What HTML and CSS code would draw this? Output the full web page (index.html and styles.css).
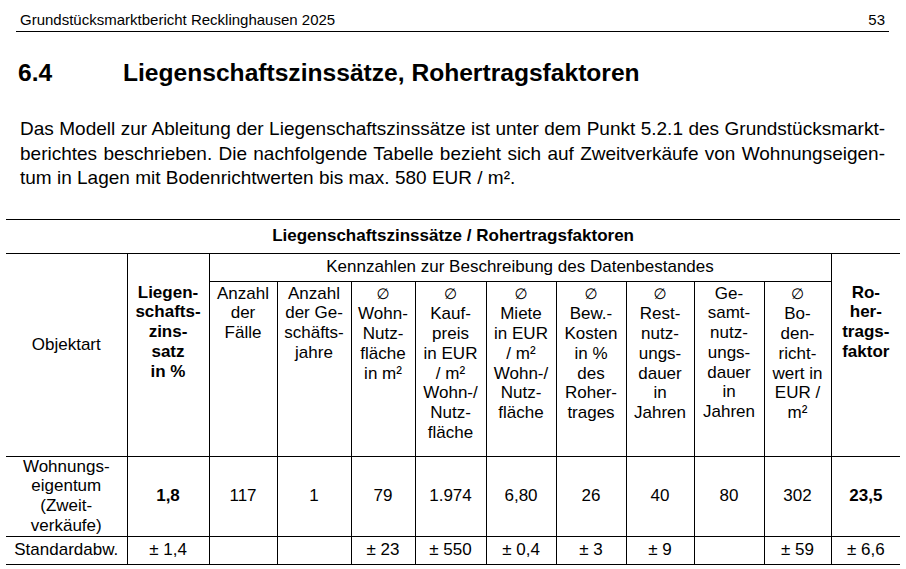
FILE: index.html
```html
<!DOCTYPE html>
<html lang="de">
<head>
<meta charset="utf-8">
<title>Grundstücksmarktbericht Recklinghausen 2025</title>
<link rel="stylesheet" href="styles.css">
</head>
<body>
<div class="page">
  <header class="running-head">
    <span>Grundstücksmarktbericht Recklinghausen 2025</span>
    <span>53</span>
  </header>

  <h1 class="section-title"><span class="sec-num">6.4</span><span>Liegenschaftszinssätze, Rohertragsfaktoren</span></h1>

  <p class="intro">
    <span class="jline">Das Modell zur Ableitung der Liegenschaftszinssätze ist unter dem Punkt 5.2.1 des Grundstücksmarkt-</span>
    <span class="jline">berichtes beschrieben. Die nachfolgende Tabelle bezieht sich auf Zweitverkäufe von Wohnungseigen-</span>
    <span class="lline">tum in Lagen mit Bodenrichtwerten bis max. 580 EUR / m².</span>
  </p>

  <table class="data">
    <colgroup>
      <col class="w121"><col class="w82"><col class="w68"><col class="w74"><col class="w64"><col class="w71">
      <col class="w70"><col class="w70"><col class="w68"><col class="w70"><col class="w67"><col class="w69">
    </colgroup>
    <thead>
      <tr class="r-title">
        <th colspan="12" class="first last bold">Liegenschaftszinssätze / Rohertragsfaktoren</th>
      </tr>
      <tr class="r-group">
        <th rowspan="2" class="first obj">Objektart</th>
        <th rowspan="2" class="bold side">Liegen-<br>schafts-<br>zins-<br>satz<br>in %</th>
        <th colspan="9" class="group">Kennzahlen zur Beschreibung des Datenbestandes</th>
        <th rowspan="2" class="last bold side">Ro-<br>her-<br>trags-<br>faktor</th>
      </tr>
      <tr class="r-sub">
        <th>Anzahl<br>der<br>Fälle</th>
        <th>Anzahl<br>der Ge-<br>schäfts-<br>jahre</th>
        <th><span class="dia">∅</span><br>Wohn-<br>Nutz-<br>fläche<br>in m²</th>
        <th><span class="dia">∅</span><br>Kauf-<br>preis<br>in EUR<br>/ m²<br>Wohn-/<br>Nutz-<br>fläche</th>
        <th><span class="dia">∅</span><br>Miete<br>in EUR<br>/ m²<br>Wohn-/<br>Nutz-<br>fläche</th>
        <th><span class="dia">∅</span><br>Bew.-<br>Kosten<br>in %<br>des<br>Roher-<br>trages</th>
        <th><span class="dia">∅</span><br>Rest-<br>nutz-<br>ungs-<br>dauer<br>in<br>Jahren</th>
        <th>Ge-<br>samt-<br>nutz-<br>ungs-<br>dauer<br>in<br>Jahren</th>
        <th><span class="dia">∅</span><br>Bo-<br>den-<br>richt-<br>wert in<br>EUR /<br>m²</th>
      </tr>
    </thead>
    <tbody>
      <tr class="r-data">
        <td class="first">Wohnungs-<br>eigentum<br>(Zweit-<br>verkäufe)</td>
        <td class="bold">1,8</td>
        <td>117</td>
        <td>1</td>
        <td>79</td>
        <td>1.974</td>
        <td>6,80</td>
        <td>26</td>
        <td>40</td>
        <td>80</td>
        <td>302</td>
        <td class="last bold">23,5</td>
      </tr>
      <tr class="r-std">
        <td class="first">Standardabw.</td>
        <td>± 1,4</td>
        <td></td>
        <td></td>
        <td>± 23</td>
        <td>± 550</td>
        <td>± 0,4</td>
        <td>± 3</td>
        <td>± 9</td>
        <td></td>
        <td>± 59</td>
        <td class="last">± 6,6</td>
      </tr>
    </tbody>
  </table>
</div>
</body>
</html>
```

FILE: styles.css
```css
html, body {
  margin: 0;
  padding: 0;
  background: #fff;
}

body {
  font-family: "Liberation Sans", Arial, sans-serif;
  color: #000;
}

.page {
  width: 906px;
}

.running-head {
  display: flex;
  justify-content: space-between;
  margin: 0 17px 0 16px;
  padding: 12px 4px 3px 4px;
  font-size: 15px;
  line-height: 16px;
  border-bottom: 1px solid #000;
}

.section-title {
  display: flex;
  margin: 28px 0 0 18px;
  font-size: 24.6px;
  line-height: 26px;
  font-weight: bold;
}

.sec-num {
  width: 105px;
}

.intro {
  margin: 31px 0 0 20px;
  width: 865px;
  font-size: 19px;
  line-height: 24.5px;
}

.jline {
  display: block;
  text-align: justify;
  text-align-last: justify;
}

.lline {
  display: block;
}

.data {
  margin: 28px 0 0 6px;
  width: 894px;
  border-collapse: collapse;
  table-layout: fixed;
  font-size: 17px;
  line-height: 19.8px;
}

.w121 { width: 121px; }
.w82 { width: 82px; }
.w74 { width: 74px; }
.w71 { width: 71px; }
.w70 { width: 70px; }
.w69 { width: 69px; }
.w68 { width: 68px; }
.w67 { width: 67px; }
.w64 { width: 64px; }

.data th,
.data td {
  border: 1px solid #000;
  padding: 0;
  text-align: center;
  font-weight: normal;
}

.data .first { border-left: none; }
.data .last { border-right: none; }
.data .bold { font-weight: bold; }

.r-title th {
  height: 33px;
  vertical-align: middle;
}

.r-group .group {
  height: 27px;
  vertical-align: middle;
}

.r-group .obj {
  vertical-align: top;
  padding-top: 81px;
}

.r-group .side {
  vertical-align: top;
  padding-top: 29px;
}

.r-sub th {
  height: 172px;
  vertical-align: top;
  padding-top: 2px;
}

.dia {
  font-family: "DejaVu Sans", sans-serif;
  font-size: 15px;
  font-weight: normal;
}

.r-data td {
  height: 79px;
  vertical-align: middle;
}

.r-std td {
  height: 27px;
  vertical-align: middle;
}
```
